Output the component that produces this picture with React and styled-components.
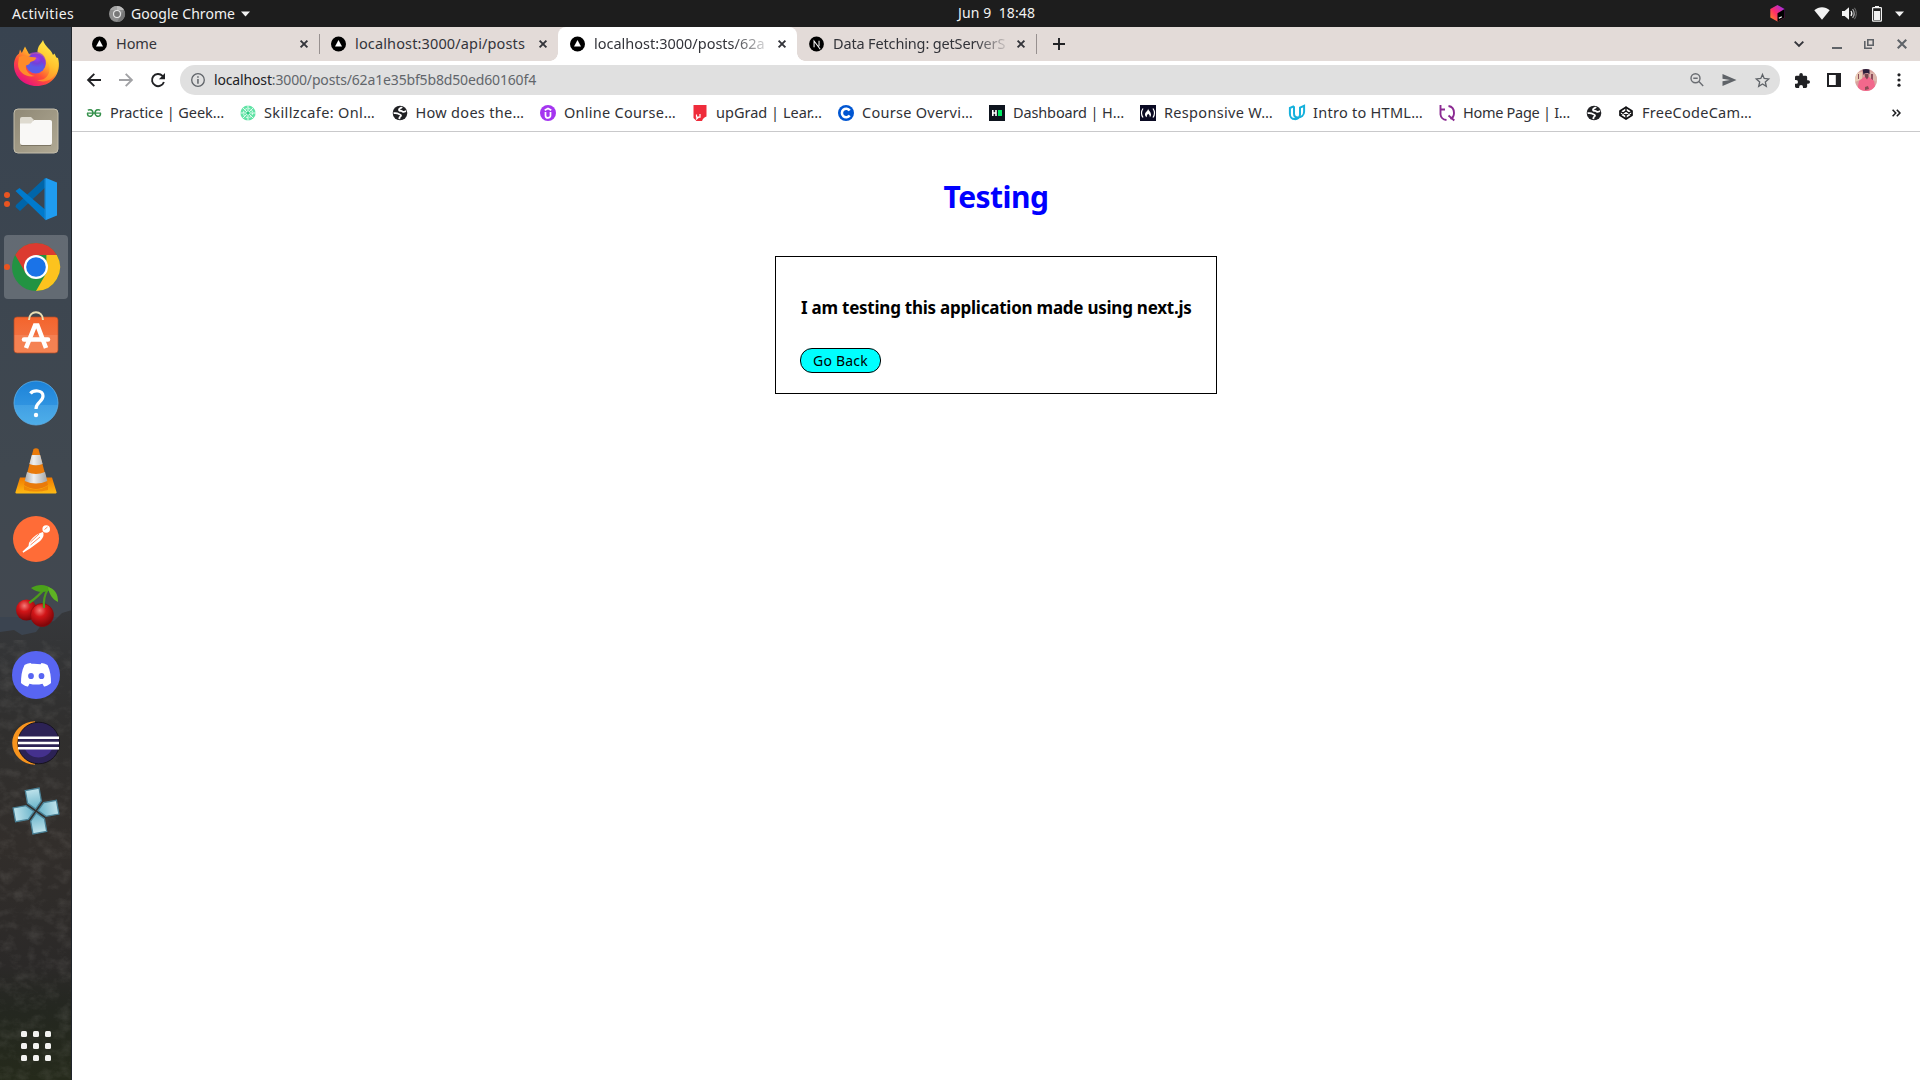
import React from 'react';
import styled, { createGlobalStyle } from 'styled-components';

const Global = createGlobalStyle`
  * { box-sizing: border-box; }
  body { margin: 0; background: #fff; font-family: "Noto Sans", "Open Sans", sans-serif; overflow: hidden; }
  svg { display: block; flex: none; overflow: visible; }
`;

const Screen = styled.div`width: 1920px; height: 1080px; display: flex; flex-direction: column; overflow: hidden;`;
const Label = styled.span`
  white-space: pre; line-height: 20px; letter-spacing: ${p => p.$ls || 0}px;
  ${p => p.$w && `width: ${p.$w}px;`}
`;

/* ---------- GNOME top bar ---------- */
const TopBar = styled.header`
  height: 27px; flex: none; background: #1d1d1d; color: #f2f2f2; font-size: 14px;
  display: grid; grid-template-columns: 1fr auto 1fr; align-items: center; padding: 0 16px 0 12px;
`;
const TopLeft = styled.div`display: flex; align-items: center;`;
const AppMenu = styled.div`display: flex; align-items: center; gap: 6px; margin-left: 35px;`;
const Clock = styled.div`padding: 0 0 2px 77px; letter-spacing: 0.1px; white-space: pre; line-height: 20px;`;
const Tray = styled.div`display: flex; align-items: center; justify-content: flex-end;`;
const TrayItem = styled.div`margin-left: ${p => p.$gap}px;`;

/* ---------- dock ---------- */
const Main = styled.div`flex: 1; display: flex; min-height: 0;`;
const Dock = styled.nav`
  width: 72px; flex: none; position: relative; display: flex; flex-direction: column; align-items: center;
  padding-top: 2px; background: #3b4450; overflow: hidden;
`;
const Wallpaper = styled.svg`position: absolute; inset: 0; z-index: 0;`;
const DockItem = styled.div`
  width: 64px; height: 64px; margin: 2px 0; position: relative; z-index: 1; border-radius: 4px; flex: none;
  display: flex; align-items: center; justify-content: center;
  background: ${p => (p.$active ? 'rgba(255,255,255,0.2)' : 'transparent')};
`;
const Dots = styled.div`
  position: absolute; left: 0; top: 0; height: 100%; display: flex; flex-direction: column;
  justify-content: center; gap: 3px;
  i { width: 6px; height: 6px; border-radius: 50%; background: #e95420; }
`;
const AppGrid = styled.div`
  margin-top: auto; margin-bottom: 19px; z-index: 1; display: grid; gap: 6px; grid-template-columns: repeat(3, 6px);
  i { width: 6px; height: 6px; border-radius: 1.5px; background: #f2f2f0; }
`;

/* ---------- browser ---------- */
const Browser = styled.main`flex: 1; display: flex; flex-direction: column; background: #fff; min-width: 0;`;
const TabStrip = styled.div`
  height: 34px; flex: none; background: #e3dbd8; display: flex; align-items: center; padding: 0 13px 0 8px;
  color: #33343a; font-size: 14.5px;
`;
const Tab = styled.div`
  width: 239px; height: 34px; flex: none; position: relative; display: flex; align-items: center; padding: 0 11px 0 12px; gap: 9px;
  ${p => p.$active && `
    background: #fff; border-radius: 8px 8px 0 0;
    &::before, &::after { content: ''; position: absolute; bottom: 0; width: 8px; height: 8px; }
    &::before { left: -8px; background: radial-gradient(circle at 0 0, transparent 7.5px, #fff 8px); }
    &::after { right: -8px; background: radial-gradient(circle at 100% 0, transparent 7.5px, #fff 8px); }
  `}
`;
const TabTitle = styled.div`
  flex: 1; min-width: 0; white-space: pre; line-height: 22px; padding-bottom: 2px; letter-spacing: ${p => p.$ls || 0}px;
  ${p => p.$fade && `mask-image: linear-gradient(90deg, #000 ${p.$fade}%, rgba(0,0,0,.15) 100%);`}
`;
const TabClose = styled.div`display: flex; width: 10px; justify-content: flex-end;`;
const Divider = styled.div`width: 1px; height: 20px; background: #97908f; margin: 0 -1px 0 0; position: relative;`;
const NewTab = styled.div`margin-left: 17px;`;
const WindowButtons = styled.div`margin-left: auto; display: flex; align-items: center;`;
const WinBtn = styled.div`margin-left: ${p => p.$gap || 0}px;`;

const Toolbar = styled.div`height: 38px; flex: none; display: flex; align-items: center; padding: 0 16px 0 15px;`;
const NavButtons = styled.div`display: flex; align-items: center; width: 93px; gap: 18px;`;
const Omnibox = styled.div`
  width: 1600px; flex: none; height: 30px; border-radius: 15px; background: #e0e0e0; display: flex; align-items: center;
  padding: 0 10px 0 11px; font-size: 14px; color: #62666b;
  b { font-weight: 400; color: #202124; }
`;
const Url = styled.div`margin-left: 9px; flex: 1; letter-spacing: -0.15px; line-height: 20px; white-space: pre;`;
const OmniActions = styled.div`display: flex; align-items: center; gap: 18px;`;
const ToolbarActions = styled.div`display: flex; align-items: center; padding-left: 15px;`;
const Action = styled.div`margin-left: ${p => p.$gap}px;`;

const BookmarkBar = styled.div`
  height: 33px; flex: none; border-bottom: 1px solid #c9c9cb; display: flex; align-items: center; gap: 16px;
  padding: 0 19px 4px 14px; font-size: 14.5px; color: #303136;
`;
const Bookmark = styled.div`display: flex; align-items: center; gap: 8px; ${Label} { padding-bottom: 2px; }`;
const More = styled.div`margin-left: auto;`;

/* ---------- page ---------- */
const Page = styled.section`flex: 1; display: flex; flex-direction: column; align-items: center; color: #000;`;
const Title = styled.h1`margin: 44px 0 0; font-size: 30px; line-height: 42px; font-weight: 700; letter-spacing: -0.5px; color: #00f;`;
const Card = styled.article`
  margin-top: 38px; width: 442px; height: 138px; border: 1px solid #000; padding: 39px 20px 0 25px; align-self: center;
`;
const Body = styled.h3`margin: 0; font-size: 17px; line-height: 24px; font-weight: 700; letter-spacing: -0.24px; white-space: nowrap;`;
const BackButton = styled.button`
  margin: 28px 0 0 -1px; width: 81px; height: 25px; border: 1px solid #000; border-radius: 12px; background: #0ff; color: #000;
  font: 14px/20px "Noto Sans", sans-serif; letter-spacing: 0.2px; padding: 0; display: block;
`;

/* ---------- small icons ---------- */
const X = ({ s = 8, c = '#33343a', w = 1.9 }) => (
  <svg width={s} height={s} viewBox="0 0 8 8"><path d="M.6.6 7.4 7.4M7.4.6.6 7.4" stroke={c} strokeWidth={w * 8 / s} /></svg>
);
const Vercel = () => (
  <svg width="15" height="16" viewBox="0 0 15 16"><circle cx="7.5" cy="8" r="7.5" /><path d="M7.5 4 11 10.5H4z" fill="#fff" /></svg>
);
const NextLogo = () => (
  <svg width="15" height="16" viewBox="0 0 16 16"><circle cx="8" cy="8" r="7.9" /><path d="M5.4 11.5V4.8L12 13.6M10.7 4.5v6" stroke="#fff" strokeWidth="1.1" fill="none" /></svg>
);
const ChromeMono = () => (
  <svg width="16" height="16" viewBox="0 0 16 16">
    <circle cx="8" cy="8" r="8" fill="#8d8d8d" />
    <path d="M8 0a8 8 0 0 1 7 4H8z" fill="#bcbcbc" /><path d="M1 4a8 8 0 0 1 7-4l0 4z" fill="#a5a5a5" />
    <path d="M15 4a8 8 0 0 1-7 12l3.5-6z" fill="#777" />
    <circle cx="8" cy="8" r="4" fill="#e8e8e8" /><circle cx="8" cy="8" r="2.9" fill="#777" />
  </svg>
);
const Caret = ({ w = 10 }) => <svg width={w} height="6" viewBox="0 0 10 6"><path d="M0 .3h10L5 5.8z" fill="#f2f2f2" /></svg>;
const Toolbox = () => (
  <svg width="15" height="17" viewBox="0 0 15 17">
    <defs><linearGradient id="tb" x1="0" y1="1" x2="1" y2="0"><stop offset="0" stopColor="#ff9419" /><stop offset=".45" stopColor="#ff2d6a" /><stop offset="1" stopColor="#8a2cff" /></linearGradient></defs>
    <path d="M7.5 0 14.6 4v8.5L7.5 16.6.3 12.5V4z" fill="url(#tb)" /><path d="M7.5 8.2 14.6 4v8.5l-7.1 4.1z" fill="#000" />
    <path d="M8.800 13.300l3-1.600" stroke="#fff" strokeWidth="1.100" />
  </svg>
);
const Wifi = () => <svg width="16" height="13" viewBox="0 0 16 13"><path d="M.3 3.300C4.800-.7 11.200-.7 15.700 3.300L8 12.700z" fill="#f2f2f2" /></svg>;
const Volume = () => (
  <svg width="16" height="13" viewBox="0 0 16 13" fill="none">
    <path d="M0 4h2.600L7 .3v12.400L2.600 9H0z" fill="#f2f2f2" />
    <path d="M9 4q1.700 2.500 0 5" stroke="#f2f2f2" strokeWidth="1.300" /><path d="M10.600 2q3.300 4.500 0 9" stroke="#aaa" strokeWidth="1.200" /><path d="M12.500.8q3.600 5.700 0 11.400" stroke="#777" />
  </svg>
);
const Battery = () => (
  <svg width="10" height="16" viewBox="0 0 10 16"><path d="M3 0h4v1.500H3z" fill="#f2f2f2" /><rect x=".6" y="1.600" width="8.800" height="13.600" rx=".6" fill="none" stroke="#f2f2f2" strokeWidth="1.200" /><path d="M2 5h6v9H2z" fill="#f2f2f2" /></svg>
);
const Arrow = ({ flip, c }) => (
  <svg width="14" height="14" viewBox="0 0 14 14" transform={flip ? 'scale(-1 1)' : undefined}>
    <path d="M14 7H1.600M7.300 .8 1.100 7l6.200 6.200" fill="none" stroke={c} strokeWidth="1.900" />
  </svg>
);
const Reload = () => (
  <svg width="14" height="14" viewBox="0 0 14 14"><path d="M12.900 9A6.100 6.100 0 1 1 11.500 2.800L12.200 3.600" fill="none" stroke="#202124" strokeWidth="1.900" /><path d="M14 0v6.200H7.900z" fill="#202124" /></svg>
);
const Info = () => (
  <svg width="14" height="14" viewBox="0 0 14 14"><circle cx="7" cy="7" r="6.300" fill="none" stroke="#5f6368" strokeWidth="1.300" /><path d="M6.200 3.300h1.500v1.500H6.200zM6.200 6h1.500v4.800H6.200z" fill="#5f6368" /></svg>
);
const ZoomOut = () => (
  <svg width="14" height="14" viewBox="0 0 14 14" fill="none" stroke="#6a6d72" strokeWidth="1.400"><circle cx="5.500" cy="5.300" r="4.500" /><path d="M8.900 8.600 13.200 13M3.300 5.300h4.400" /></svg>
);
const Send = () => <svg width="15" height="12" viewBox="0 0 15 12"><path d="M.5 0 14.500 6 .5 12V7.300L8 6 .5 4.700z" fill="#5f6368" /></svg>;
const Star = () => <svg width="15" height="15" viewBox="0 0 15 15"><path d="M7.500 1.500 9.200 5.500 13.700 5.900 10.300 8.900 11.300 13.300 7.500 10.900 3.700 13.300 4.700 8.900 1.300 5.900 5.800 5.500z" fill="none" stroke="#5f6368" strokeWidth="1.300" /></svg>;
const Puzzle = () => (
  <svg width="15" height="15" viewBox="2 1 21 21"><path d="M20.500 11H19V7a2 2 0 0 0-2-2h-4V3.500a2.500 2.500 0 0 0-5 0V5H4a2 2 0 0 0-2 2v3.800h1.500a2.700 2.700 0 0 1 0 5.400H2V20a2 2 0 0 0 2 2h3.800v-1.500a2.700 2.700 0 0 1 5.400 0V22H17a2 2 0 0 0 2-2v-4h1.500a2.500 2.500 0 0 0 0-5z" fill="#202124" /></svg>
);
const SidePanel = () => <svg width="14" height="14" viewBox="0 0 14 14"><path d="M0 0h14v14H0zM2 2v10h6.800V2z" fillRule="evenodd" fill="#202124" /></svg>;
const Avatar = () => (
  <svg width="22" height="22" viewBox="0 0 22 22">
    <defs><clipPath id="av"><circle cx="11" cy="11" r="11" /></clipPath></defs>
    <g clipPath="url(#av)">
      <path d="M0 0h22v22H0z" fill="#d9a39f" /><path d="M0 4l7-1v7l-7 3z" fill="#e9cdb6" /><path d="M15 3l7 2v8l-6-3z" fill="#dcb6ac" /><path d="M16 5h2v6h-2zM3 5h1v5H3z" fill="#8e4d5c" />
      <path d="M2 22l2-10 5-4h5l5 4 2 10z" fill="#f2688c" /><path d="M0 16l5 6H0zM22 15l-4 7h4z" fill="#f0dfe0" />
      <path d="M9.500 5h4v3l-1.500 2.500-2-2.500z" fill="#7a4450" /><path d="M7.500 0h7v5l-2-1-3 .5-1 1.500z" fill="#2c1f3c" /><path d="M10 18l3-1 1 3-4 1z" fill="#8b4b55" />
    </g>
  </svg>
);
const Kebab = () => <svg width="4" height="14" viewBox="0 0 4 14" fill="#202124"><circle cx="2" cy="1.800" r="1.600" /><circle cx="2" cy="7" r="1.600" /><circle cx="2" cy="12.200" r="1.600" /></svg>;

/* ---------- favicons ---------- */
const Fav = ({ children }) => <svg width="16" height="16" viewBox="0 0 16 16">{children}</svg>;
const Geeks = () => (
  <Fav><g fill="none" stroke="#2f8d46" strokeWidth="1.500"><path d="M1.800 5.100C4.500 4 7 5 7 8s-3 4-5 2.600L1.300 8.200M14.200 5.100C11.500 4 9 5 9 8s3 4 5 2.600l.7-2.400" /><path d="M1 8.100h14" strokeWidth="1.200" /></g></Fav>
);
const Skillz = () => (
  <Fav><circle cx="8" cy="8" r="7.600" fill="#62e3a6" /><g stroke="#effff7" strokeWidth=".9" fill="none"><path d="M8 0v16M0 8h16M2.300 2.300l11.400 11.400M13.700 2.300 2.300 13.700" /><circle cx="8" cy="8" r="4.600" strokeDasharray="2 1.600" /></g><circle cx="8" cy="8" r="1.600" fill="#2dcf84" /></Fav>
);
const Globe = () => (
  <Fav>
    <circle cx="8" cy="8" r="7.300" fill="#202124" />
    <path d="M9.800 1.800C9.600 3.300 7.200 3 7 4.500c-.1 1.200 1 1.300 2.200 1.400 1.200.1 1.400 1 2.600.9 1 0 1.600-.8 2.400-.6M1.600 8.200c1.800-.3 3.800-.2 5 .7 1 .8 2.400.5 2.400 1.600 0 1.200-1.300 1-1.500 2.200l-.2 1.500" fill="none" stroke="#fff" strokeWidth="1.800" />
  </Fav>
);
const Udemy = () => (
  <Fav><circle cx="8" cy="8" r="8" fill="#a435f0" /><path d="M5.500 7v3.400a2.500 2.500 0 0 0 5 0V7M4.700 5.200 8 3.400l3.300 1.800" fill="none" stroke="#fff" strokeWidth="1.700" /></Fav>
);
const UpGrad = () => (
  <Fav><path d="M1.500 0h13v11.500q-3.500 1-4.500 4.500H4.500l-3-3z" fill="#ef2c3b" /><path d="M4.500 9.500v2.700H8V9M6.500 12.300 4 14.500" fill="none" stroke="#fff" strokeWidth="1.200" /></Fav>
);
const Coursera = () => (
  <Fav><circle cx="8" cy="8" r="8" fill="#0056d2" /><path d="M11.700 5.500A4.300 4.300 0 1 0 11.700 10.500" fill="none" stroke="#fff" strokeWidth="2.500" /></Fav>
);
const Hacker = () => (
  <Fav><path d="M0 0h16v16H0z" fill="#0e141e" /><path d="M3.800 5v6M7 5v6M3.800 8H7" stroke="#fff" strokeWidth="1.600" /><path d="M9 5h4v6H9z" fill="#00ea64" /></Fav>
);
const Fcc = () => (
  <Fav><path d="M0 0h16v16H0z" fill="#0a0a23" /><path d="M3 3.500q-3 4.500 0 9M13 3.500q3 4.500 0 9" fill="none" stroke="#fff" strokeWidth="1.200" /><path d="M8 3.500c.3 2 3 3.300 3 6 0 1.300-.5 2.200-1.300 2.800.5-1.500-.5-2.500-1.500-3.500-1 1-1.700 2-1.300 3.500C5.500 11.500 5 10.500 5 9.500 5 7 8.300 6 8 3.500z" fill="#fff" /></Fav>
);
const Udacity = () => (
  <Fav><path d="M5 1.200.9 3v5.800c0 3 2 5.300 4.600 5.300 1.500 0 2.500-.7 3.300-1.800M5 1.200v7.200c0 2.400 1.400 4 3.700 4 3.500 0 6.400-2 6.400-6V.8L11 2.600v7c0 2.500-2.500 4.900-5.500 4.500" fill="none" stroke="#16b1dc" strokeWidth="2" /></Fav>
);
const TQ = () => (
  <Fav><g fill="none" stroke="#8b2a92" strokeWidth="1.900"><path d="M1.500 0v9.500Q2 14.300 7.500 15M1.500 4.500H6M9.500 1C13 1.500 15 4.500 15 8c0 2.800-1.500 5-3.500 6" /><path d="M9.500 10.500l5.800 5" /></g></Fav>
);
const Codepen = () => (
  <Fav><g fill="none" stroke="#101012" strokeWidth="1.700" strokeLinejoin="round"><path d="M8 2.200 14 6v4.200L8 14 2 10.200V6z" /><path d="M2 6l6 4.200L14 6M2 10.200 8 6l6 4.200M8 1.800V6M8 10.200v4.100" strokeWidth="1.400" /></g></Fav>
);

const BOOKMARKS = [
  [Geeks, 'Practice | Geek…', 114, -0.08], [Skillz, 'Skillzcafe: Onl…', 111.5, 0.37], [Globe, 'How does the…', 108.5, 0.3],
  [Udemy, 'Online Course…', 112, 0.27], [UpGrad, 'upGrad | Lear…', 106, 0.02], [Coursera, 'Course Overvi…', 111, 0.27],
  [Hacker, 'Dashboard | H…', 111, -0.13], [Fcc, 'Responsive W…', 109, 0.31], [Udacity, 'Intro to HTML…', 110, 0.27],
  [TQ, 'Home Page | I…', 107, -0.28], [Globe], [Codepen, 'FreeCodeCam…', 110, 0.26],
];

/* ---------- dock icons ---------- */
const Ico = ({ children }) => <svg width="48" height="48" viewBox="0 0 48 48">{children}</svg>;
const Firefox = () => (
  <Ico>
    <defs>
      <linearGradient id="ff1" x1=".85" y1=".1" x2=".2" y2=".9"><stop offset="0" stopColor="#ffe53b" /><stop offset=".35" stopColor="#ffb02a" /><stop offset=".65" stopColor="#ff4f36" /><stop offset="1" stopColor="#e8117f" /></linearGradient>
      <linearGradient id="ff2" x1=".8" y1="0" x2=".5" y2="1"><stop offset="0" stopColor="#fff44f" /><stop offset=".6" stopColor="#ffc22e" /><stop offset="1" stopColor="#ff8a2b" /></linearGradient>
      <radialGradient id="ff3" cx=".55" cy=".2"><stop offset="0" stopColor="#a93df0" /><stop offset=".6" stopColor="#7340d8" /><stop offset="1" stopColor="#5a5be8" /></radialGradient>
    </defs>
    <path d="M8 10.500 9.800 14 13 7.500l4 7.500 10-2L46 19c2 7 1 15-4.500 21C37 45 31 47 24.500 47 12 47 2 37.500 2 26.500c0-6 2-9.500 5-12z" fill="url(#ff1)" />
    <path d="M31 1c2 7 8 9 10 15l1.500-1.500C46.500 22 48 33 39 40 34 43 29 43 25 41c8 1 13-5 12.500-12C37 21 29 18 25.500 13 25.500 7 29 5 31 1z" fill="url(#ff2)" />
    <circle cx="23.700" cy="24.500" r="10" fill="url(#ff3)" />
    <path d="M7 18c4-2 8-2 12 0l5.500.5c-1 3-3 3.500-6 4.500-1 2.500-2.500 3-4.500 3.500C13 31 17 36 23 37c-8 2-17-3-17-12z" fill="#ff8b2a" />
    <path d="M17 15c5-3.500 13-2.500 16 4 1.500 3 1 7-1 10 0-5-3-9-7-10z" fill="#8f35d6" opacity=".7" />
  </Ico>
);
const Files = () => (
  <Ico>
    <defs><linearGradient id="fl" x1="0" y1="0" x2="1" y2="1"><stop offset="0" stopColor="#8f8875" /><stop offset="1" stopColor="#b0a994" /></linearGradient></defs>
    <rect x="2" y="2" width="44" height="44" rx="4" fill="url(#fl)" stroke="#c3bdab" strokeWidth="1" />
    <rect x="8" y="14" width="32" height="24" rx="2.500" fill="#f9f8f6" /><path d="M8 12a2 2 0 0 1 2-2h9l3 3-3 3.500H8z" fill="#dedacf" /><path d="M22 13h16a2 2 0 0 1 2 2v3H18z" fill="#f9f8f6" /><path d="M9 38.500h30" stroke="#7d7664" />
  </Ico>
);
const Code = () => (
  <Ico>
    <path d="M33 3 37 9 8 36l-4.500-4 .5-2z" fill="#0065a9" /><path d="M3.500 16 7.500 13 36 37l-2 8.500z" fill="#007acc" />
    <path d="M34 3l11 4.500v33L34 45z" fill="#1f9cf0" /><path d="M34 3l-1.500 1V44l1.500 1z" fill="#1788d5" />
  </Ico>
);
const Chrome = () => (
  <Ico>
    <circle cx="24" cy="24" r="24" fill="#229342" />
    <path d="M44.800 12A24 24 0 0 1 24 48L34.400 30 34.400 12z" fill="#fcc31e" />
    <path d="M3.200 12A24 24 0 0 1 44.800 12H24L13.600 30z" fill="#dc3a30" />
    <circle cx="24" cy="24" r="12" fill="#fff" /><circle cx="24" cy="24" r="9.800" fill="#1a73e8" />
  </Ico>
);
const Software = () => (
  <Ico>
    <defs><linearGradient id="sw" x2="0" y2="1"><stop offset="0" stopColor="#f4642c" /><stop offset=".5" stopColor="#f3703e" /><stop offset=".51" stopColor="#f58052" /><stop offset="1" stopColor="#f58352" /></linearGradient></defs>
    <rect x="2" y="6" width="44" height="36" rx="3" fill="url(#sw)" stroke="#b14a25" strokeWidth=".7" />
    <path d="M17 9C17-1.500 31-1.500 31 9" fill="none" stroke="#eadfb4" strokeWidth="2" />
    <path d="M14 37 23 14.500h2.500L34 37" fill="none" stroke="#fff" strokeWidth="4.500" /><path d="M12 28.500h24" stroke="#fff" strokeWidth="4.500" strokeLinecap="round" />
  </Ico>
);
const Help = () => (
  <Ico>
    <defs><linearGradient id="hp" x2="0" y2="1"><stop offset="0" stopColor="#1c82d8" /><stop offset=".54" stopColor="#2f93e0" /><stop offset=".55" stopColor="#41a0e4" /><stop offset="1" stopColor="#4eaee9" /></linearGradient></defs>
    <circle cx="24" cy="24" r="22" fill="url(#hp)" stroke="#5cb0ea" strokeWidth=".8" />
    <path d="M18.500 14.500C21 11 31 10.500 31 17c0 6-7 6-7 13" fill="none" stroke="#fff" strokeWidth="3.200" /><circle cx="24" cy="36" r="2.200" fill="#fff" />
  </Ico>
);
const Vlc = () => (
  <Ico>
    <defs><linearGradient id="vl" x2="0" y2="1"><stop offset="0" stopColor="#f07800" /><stop offset="1" stopColor="#ffbb13" /></linearGradient><linearGradient id="vg"><stop offset="0" stopColor="#aaa" /><stop offset=".4" stopColor="#eee" /><stop offset="1" stopColor="#a6a6a6" /></linearGradient></defs>
    <path d="M8 30.500h32l4.500 14.500a1 1 0 0 1-1 1.500h-39a1 1 0 0 1-1-1.500z" fill="url(#vl)" />
    <path d="M21.500 2q2.500-1.500 5 0L36 38q-12 8-24 0z" fill="#e97a0a" /><path d="M19.800 8h8.400L30.600 17q-6.600 2.500-13.200 0zM15 25q9 4 18 0l2.300 9q-11.300 5-22.600 0z" fill="url(#vg)" />
    <path d="M12 39q12 7 24 0v4q-12 3-24 0z" fill="#ea7d06" opacity=".7" />
  </Ico>
);
const Postman = () => (
  <Ico>
    <circle cx="24" cy="24" r="23" fill="#ff6c37" /><circle cx="34.200" cy="14" r="3.800" fill="#fff" />
    <path d="M31 17c-6 1.500-11.500 6-14 11l-.5 3L10.500 36.500l.7 1.300L18 33.500l9.500-7q4.500-4 4-8z" fill="#fff" />
    <path d="M18.500 27l8.500-8M18.500 30l9.500-8M32.500 14.500l3-2.500" stroke="#ff6c37" strokeWidth=".8" />
  </Ico>
);
const Cherry = () => (
  <Ico>
    <defs><radialGradient id="ch" cx=".4" cy=".3" r=".7"><stop offset="0" stopColor="#f47a76" /><stop offset=".4" stopColor="#d21518" /><stop offset="1" stopColor="#7c0508" /></radialGradient></defs>
    <circle cx="14.500" cy="27" r="10.500" fill="url(#ch)" /><circle cx="30" cy="32" r="11.500" fill="url(#ch)" stroke="#8c090b" strokeWidth=".7" />
    <path d="M17 20Q27 13 33 5M32 25Q31 14 36 6" fill="none" stroke="#4d9a1d" strokeWidth="2.200" />
    <path d="M19 5C26 1 34 1 40 6 34 10 25 10 19 5z" fill="#4ba21a" /><path d="M36 4c7 2 10 7 10 15-6-3-9-8-10-15z" fill="#5eb323" />
  </Ico>
);
const Discord = () => (
  <Ico>
    <circle cx="24" cy="24" r="24" fill="#5865f2" />
    <path d="M19.500 12.800 18.500 12C15 12.500 12.500 14 12.500 14 9.500 20 9 26 9 32c3 3 7 3.500 7 3.500l1.500-2.800q6.500 1.800 13 0l1.500 2.800s4-.5 7-3.500c0-6-.5-12-3.500-18 0 0-2.500-1.500-6-2l-1 1.300q-4.500-.8-9-.5z" fill="#fff" />
    <ellipse cx="19" cy="25" rx="2.900" ry="3.100" fill="#5865f2" /><ellipse cx="29.500" cy="25" rx="2.900" ry="3.100" fill="#5865f2" />
  </Ico>
);
const Eclipse = () => (
  <Ico>
    <path d="M23 2.300A22.800 21.700 0 0 0 23 45.700z" fill="#f7941e" /><circle cx="26.700" cy="24" r="20.800" fill="#2c2255" stroke="#17131f" />
    <path d="M13 30h27c-2 5-8 8.500-13.500 8.500S15 35 13 30z" fill="#44318d" />
    <path d="M6 18.800h41M6 24h41M6 29.200h41" stroke="#fff" strokeWidth="2.500" />
  </Ico>
);
const Ppsspp = () => (
  <Ico>
    <defs><linearGradient id="pp" x2="0" y2="1"><stop offset="0" stopColor="#bfe3ec" /><stop offset="1" stopColor="#69b3c9" /></linearGradient></defs>
    <g transform="rotate(-10 24 24)">{[0, 90, 180, 270].map(r => <path key={r} transform={`rotate(${r} 24 24)`} d="M17 2h14v13l-7 7-7-7z" fill="url(#pp)" stroke="#4a8196" strokeWidth="1.300" />)}</g>
  </Ico>
);

const APPS = [
  { I: Firefox }, { I: Files }, { I: Code, dots: 2 }, { I: Chrome, dots: 1, active: true }, { I: Software }, { I: Help },
  { I: Vlc }, { I: Postman }, { I: Cherry }, { I: Discord }, { I: Eclipse }, { I: Ppsspp },
];

const DockWallpaper = () => (
  <Wallpaper width="72" height="1053" viewBox="0 27 72 1053">
    <defs>
      <linearGradient id="sky" x2="0" y2="1"><stop offset="0" stopColor="#384350" /><stop offset=".75" stopColor="#404850" /><stop offset="1" stopColor="#424850" /></linearGradient>
      <linearGradient id="hill" x2="0" y2="1"><stop offset="0" stopColor="#36383b" /><stop offset=".25" stopColor="#302f2e" /><stop offset=".5" stopColor="#322e2b" /><stop offset=".76" stopColor="#2b2928" /><stop offset=".85" stopColor="#242720" /><stop offset="1" stopColor="#252a1b" /></linearGradient>
      <filter id="rock" x="0" y="0" width="100%" height="100%"><feTurbulence type="fractalNoise" baseFrequency=".07 .1" numOctaves="5" seed="21" /><feColorMatrix values="0 0 0 0 .5  0 0 0 0 .48  0 0 0 0 .45  0 0 1.600 0 -.7" /></filter>
    </defs>
    <path d="M0 27h72v590H0z" fill="url(#sky)" />
    <path d="M0 632l14-2 8 5 14-3 6-8 12-3 8-8 10-3V1080H0z" fill="url(#hill)" />
    <path d="M0 640h72v440H0z" filter="url(#rock)" opacity=".17" />
    <path d="M71.500 27v1053" stroke="#20252b" />
  </Wallpaper>
);

export default function App() {
  return (
    <Screen>
      <Global />
      <TopBar>
        <TopLeft>
          <Label $w={62} $ls={0.37}>Activities</Label>
          <AppMenu><ChromeMono /><Label $w={104} $ls={0.05}>Google Chrome</Label><Caret w={9} /></AppMenu>
        </TopLeft>
        <Clock>Jun 9  18:48</Clock>
        <Tray>
          <Toolbox /><TrayItem $gap={29}><Wifi /></TrayItem><TrayItem $gap={12}><Volume /></TrayItem>
          <TrayItem $gap={14}><Battery /></TrayItem><TrayItem $gap={13}><Caret w={9} /></TrayItem>
        </Tray>
      </TopBar>
      <Main>
        <Dock>
          <DockWallpaper />
          {APPS.map(({ I, dots, active }, i) => (
            <DockItem key={i} $active={active}>
              {dots && <Dots>{Array.from({ length: dots }, (_, d) => <i key={d} />)}</Dots>}
              <I />
            </DockItem>
          ))}
          <AppGrid>{Array.from({ length: 9 }, (_, i) => <i key={i} />)}</AppGrid>
        </Dock>
        <Browser>
          <TabStrip>
            <Tab><Vercel /><TabTitle $ls={-0.1}>Home</TabTitle><TabClose><X /></TabClose></Tab>
            <Divider />
            <Tab><Vercel /><TabTitle $ls={0.14}>localhost:3000/api/posts</TabTitle><TabClose><X /></TabClose></Tab>
            <Tab $active><Vercel /><TabTitle $fade={80}>localhost:3000/posts/62a</TabTitle><TabClose><X /></TabClose></Tab>
            <Tab><NextLogo /><TabTitle $fade={82} $ls={-0.15}>Data Fetching: getServerS</TabTitle><TabClose><X /></TabClose></Tab>
            <Divider />
            <NewTab><svg width="12" height="12" viewBox="0 0 12 12"><path d="M6 0v12M0 6h12" stroke="#202124" strokeWidth="1.900" /></svg></NewTab>
            <WindowButtons>
              <WinBtn><svg width="10" height="6" viewBox="0 0 10 6"><path d="M.7.7 5 5 9.300.7" fill="none" stroke="#33343a" strokeWidth="1.900" /></svg></WinBtn>
              <WinBtn $gap={28}><svg width="10" height="10" viewBox="0 0 10 10"><path d="M0 9h10" stroke="#5f6368" strokeWidth="2" /></svg></WinBtn>
              <WinBtn $gap={22}><svg width="10" height="10" viewBox="0 0 10 10"><path d="M3.800.8h5.400v5.400H3.800zM.8 2v7.200H8" fill="none" stroke="#5f6368" strokeWidth="1.600" /></svg></WinBtn>
              <WinBtn $gap={23}><X s={10} c="#5f6368" w={2.1} /></WinBtn>
            </WindowButtons>
          </TabStrip>
          <Toolbar>
            <NavButtons><Arrow c="#202124" /><Arrow c="#a1a2a5" flip /><Reload /></NavButtons>
            <Omnibox>
              <Info />
              <Url><b>localhost</b>:3000/posts/62a1e35bf5b8d50ed60160f4</Url>
              <OmniActions><ZoomOut /><Send /><Star /></OmniActions>
            </Omnibox>
            <ToolbarActions>
              <Puzzle /><Action $gap={17}><SidePanel /></Action><Action $gap={14}><Avatar /></Action><Action $gap={20}><Kebab /></Action>
            </ToolbarActions>
          </Toolbar>
          <BookmarkBar>
            {BOOKMARKS.map(([I, text, w, ls], i) => (
              <Bookmark key={i}><I />{text && <Label $w={w} $ls={ls}>{text}</Label>}</Bookmark>
            ))}
            <More><svg width="9" height="8" viewBox="0 0 9 8"><path d="M.6.8 3.700 4 .6 7.200M4.800.8 7.900 4 4.800 7.200" fill="none" stroke="#202124" strokeWidth="1.600" /></svg></More>
          </BookmarkBar>
          <Page>
            <Title>Testing</Title>
            <Card>
              <Body>I am testing this application made using next.js</Body>
              <BackButton>Go Back</BackButton>
            </Card>
          </Page>
        </Browser>
      </Main>
    </Screen>
  );
}
